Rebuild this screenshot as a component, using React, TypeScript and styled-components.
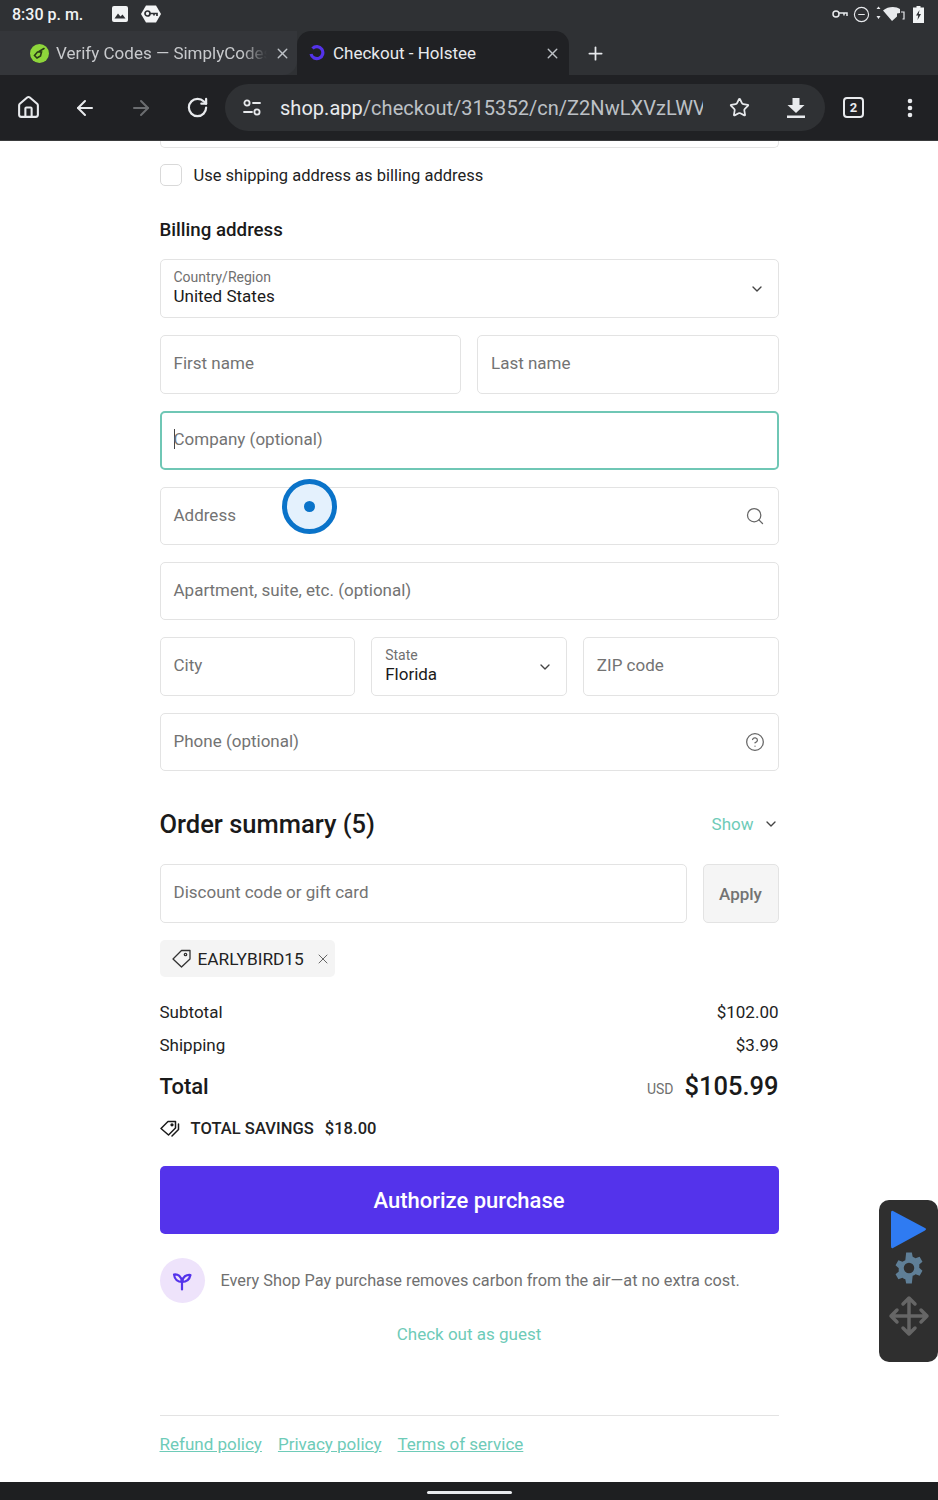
import React from "react";
import styled, { createGlobalStyle } from "styled-components";
import { ArrowLeft, ArrowRight, ChevronDown, Home, Plus, RotateCw, Search, Star, X, CircleHelp, Tag, MinusCircle } from "lucide-react";

const Global = createGlobalStyle`
  html, body { margin: 0; padding: 0; background: #fff; }
  * { box-sizing: border-box; }
  body { font-family: Roboto, "Liberation Sans", sans-serif; color: #1a1a1a; }
`;

const Screen = styled.div`
  width: 938px; height: 1500px; position: relative; overflow: hidden;
  display: flex; flex-direction: column; background: #fff;
`;
const Chrome = styled.header`background: #2f3134; color: #e8eaed; flex: none;`;
const StatusBar = styled.div`
  height: 31px; display: flex; align-items: center; padding: 0 14px 3px 12px;
`;
const Time = styled.span`font-size: 16px; font-weight: 500; margin-right: 16px; color: #f1f3f4;`;
const StatusLeft = styled.div`display: flex; align-items: center; gap: 13px; flex: 1;`;
const StatusRight = styled.div`display: flex; align-items: center; gap: 5px;`;
const TabStrip = styled.div`height: 44px; display: flex; align-items: stretch;`;
const Tab = styled.div<{ $active?: boolean }>`
  width: ${p => (p.$active ? 272 : 297)}px;
  padding: ${p => (p.$active ? "0 8px 0 12px" : "0 6px 0 30px")};
  display: flex; align-items: center; gap: 7px; font-size: 17px;
  color: ${p => (p.$active ? "#e8eaed" : "#c8cacd")};
  background: ${p => (p.$active ? "#202124" : "#34363a")};
  border-radius: ${p => (p.$active ? "14px 14px 0 0" : "0 0 14px 0")};
`;
const TabTitle = styled.span<{ $fade?: boolean }>`
  flex: 1; white-space: nowrap; overflow: hidden;
  ${p => p.$fade && "mask-image: linear-gradient(to right, #000 88%, transparent 100%);"}
`;
const NewTab = styled.div`width: 52px; display: flex; align-items: center; justify-content: center;`;
const Toolbar = styled.div`
  height: 66px; background: #202124; display: flex; align-items: center;
  border-bottom: 1px solid #3a3b3d; padding-left: 0;
`;
const ToolButton = styled.div<{ $w: number }>`
  width: ${p => p.$w}px; display: flex; justify-content: center; align-items: center; flex: none;
`;
const Omnibox = styled.div`
  width: 600px; height: 47px; margin-left: 0; border-radius: 24px; background: #2f3134;
  display: flex; align-items: center; padding-left: 17px; flex: none;
`;
const Url = styled.div`
  width: 423px; margin-left: 18px; font-size: 20px; white-space: nowrap; overflow: hidden; color: #bdc1c6; letter-spacing: 0.03px;
  b { font-weight: 400; color: #e8eaed; }
`;
const TabCount = styled.div`
  width: 21px; height: 21px; border: 2px solid #e8eaed; border-radius: 4px;
  font-size: 13px; font-weight: 700; display: flex; align-items: center; justify-content: center; color: #e8eaed;
`;
const Main = styled.main`flex: 1; display: flex; flex-direction: column; align-items: center;`;
const Column = styled.div`width: 619px; display: flex; flex-direction: column; flex: 1;`;
const CutField = styled.div`
  height: 7px; border: 1px solid #e4e4e4; border-top: 0; border-radius: 0 0 5px 5px;
`;
const CheckRow = styled.label`
  margin-top: 16px; height: 22px; display: flex; align-items: center; gap: 12px; font-size: 16.5px; color: #222;
`;
const CheckBox = styled.span`
  width: 22px; height: 22px; border: 1px solid #d9d9d9; border-radius: 5px; background: #fff;
`;
const SectionTitle = styled.h2`
  margin: 31px 0 16px; font-size: 18.7px; line-height: 26px; font-weight: 500; color: #1a1a1a;
`;
const FieldStack = styled.div`display: flex; flex-direction: column; gap: 17px;`;
const FieldRow = styled.div<{ $cols: string }>`display: grid; grid-template-columns: ${p => p.$cols}; gap: 16px;`;
const Field = styled.div<{ $focus?: boolean; $h?: number }>`
  height: ${p => p.$h ?? 59}px; padding: 0 13px; border-radius: 5px; display: flex; align-items: center; justify-content: space-between;
  border: ${p => (p.$focus ? "2px solid #6fc7b5" : "1px solid #e3e3e3")};
  ${p => p.$focus && "padding: 0 12px; margin-top:-0px;"}
  background: #fff;
`;
const Placeholder = styled.span`font-size: 17px; color: #737373; margin-top: -3px;`;
const Caret = styled.span`
  display: inline-block; width: 1px; height: 20px; background: #444; vertical-align: -4px; margin-right: -1px;
`;
const SelectText = styled.div`display: flex; flex-direction: column; margin-top: -3px;`;
const SelectLabel = styled.span`font-size: 14px; line-height: 17px; color: #707070;`;
const SelectValue = styled.span`font-size: 17px; line-height: 20px; color: #1a1a1a;`;
const SummaryHead = styled.div`
  margin-top: 35px; height: 36px; display: flex; justify-content: space-between; align-items: center;
`;
const SummaryTitle = styled.h2`margin: 0; font-size: 25.5px; font-weight: 500; color: #1a1a1a;`;
const ShowToggle = styled.div`display: flex; align-items: center; gap: 9px; font-size: 17px; color: #6ecbb8;`;
const DiscountRow = styled.div`
  margin-top: 22px; display: grid; grid-template-columns: 527px 76px; gap: 16px;
`;
const Apply = styled.div`
  height: 59px; border: 1px solid #e3e3e3; border-radius: 5px; background: #f5f5f5; display: flex; align-items: center; justify-content: center;
  font-size: 17px; font-weight: 500; color: #737373;
`;
const Chip = styled.div`
  margin-top: 17px; width: 175px; height: 37px; background: #f4f4f4; border-radius: 5px;
  display: flex; align-items: center; padding-left: 12px; gap: 7px; font-size: 17.3px; color: #222;
`;
const AmountRow = styled.div<{ $mt: number }>`
  margin-top: ${p => p.$mt}px; height: 22px; display: flex; justify-content: space-between; align-items: center; font-size: 17px; color: #222;
`;
const TotalRow = styled.div`
  margin-top: 13px; height: 34px; display: flex; justify-content: space-between; align-items: center;
`;
const TotalLabel = styled.span`font-size: 22px; font-weight: 500; color: #1a1a1a;`;
const TotalAmount = styled.div`display: flex; align-items: center; gap: 11px;`;
const Currency = styled.span`font-size: 14px; color: #707070; margin-top: 6px;`;
const TotalValue = styled.span`font-size: 25.5px; font-weight: 500; color: #1a1a1a;`;
const Savings = styled.div`
  margin-top: 13px; height: 24px; display: flex; align-items: center; font-size: 16.5px; font-weight: 500; color: #222; letter-spacing: 0.05px;
  svg { margin-right: 11px; }
  span { margin-right: 11px; }
`;
const PayButton = styled.button`
  margin-top: 26px; height: 68px; border: 0; border-radius: 5px; background: #5433eb; color: #fff;
  font: 500 22px Roboto, sans-serif;
`;
const Carbon = styled.div`
  margin-top: 24px; height: 45px; display: flex; align-items: center; gap: 16px; font-size: 16.3px; color: #707070;
`;
const Leaf = styled.div`
  width: 45px; height: 45px; border-radius: 50%; background: #eee3fb; display: flex; align-items: center; justify-content: center; flex: none;
`;
const Guest = styled.a`
  margin-top: 20px; text-align: center; font-size: 17px; line-height: 22px; color: #6ecbb8;
`;
const Footer = styled.footer`
  margin-top: auto; height: 67px; border-top: 1px solid #e3e3e3; display: flex; gap: 16px; padding-top: 18px;
`;
const FooterLink = styled.a`font-size: 17px; line-height: 20px; color: #6ecbb8; text-decoration: underline;`;
const NavBar = styled.div`
  height: 18px; flex: none; background: #1e1f21; display: flex; justify-content: center; align-items: flex-end; padding-bottom: 6px;
`;
const NavPill = styled.div`width: 85px; height: 3px; border-radius: 2px; background: #e8eaed;`;
const TouchMark = styled.div`
  position: absolute; left: 282px; top: 479px; width: 55px; height: 55px; border-radius: 50%;
  border: 5px solid #0a73c9; background: rgba(225, 240, 253, 0.9); display: flex; align-items: center; justify-content: center;
  &::after { content: ""; width: 11px; height: 11px; border-radius: 50%; background: #0a73c9; }
`;
const FloatPanel = styled.div`
  position: absolute; right: 0; top: 1200px; width: 59px; height: 162px; background: #2f2f2f; border-radius: 10px 0 0 10px 
  ; display: flex; flex-direction: column; align-items: center; padding-top: 8px;
  border-radius: 10px;
`;

const Sprout = () => (
  <svg width="22" height="22" viewBox="0 0 22 22" fill="none" stroke="#5433eb" strokeWidth="2.2" strokeLinecap="round" strokeLinejoin="round">
    <path d="M11 19.5V10.5" />
    <path d="M11 12C7 12 3.5 9.5 3 4.5C7 4 10.5 6 11 12Z" />
    <path d="M11 12C15 12 18.5 9.5 19.5 5C15.5 4.5 11.5 6.500 11 12Z" />
  </svg>
);
const Sliders = () => (
  <svg width="20" height="20" viewBox="0 0 20 20" fill="none" stroke="#e8eaed" strokeWidth="1.8" strokeLinecap="round">
    <circle cx="5" cy="5" r="2.6" /><path d="M11 5h7" /><path d="M2 14h8" /><circle cx="15" cy="14" r="2.600" />
  </svg>
);
const Download = () => (
  <svg width="20" height="22" viewBox="0 0 20 22" fill="#e8eaed"><path d="M6.500 1h7v7h5L10 16 1.500 8h5z" /><rect x="1" y="18.500" width="18" height="2.500" /></svg>
);
const Dots = () => (
  <svg width="6" height="20" viewBox="0 0 6 20" fill="#e8eaed"><circle cx="3" cy="3" r="2.300" /><circle cx="3" cy="10" r="2.300" /><circle cx="3" cy="17" r="2.300" /></svg>
);
const GalleryIcon = () => (
  <svg width="16" height="16" viewBox="0 0 16 16"><rect width="16" height="16" rx="2" fill="#f1f3f4" /><path d="M2.500 12.500l3.500-5 2.500 3 2-2 3 4z" fill="#2f3134" /></svg>
);
const VpnBadge = () => (
  <svg width="20" height="18" viewBox="0 0 20 18"><path d="M5 0.500h10L20 9l-5 8.500H5L0 9z" fill="#f4f5f6" /><circle cx="6.500" cy="8.500" r="2.500" fill="none" stroke="#2f3134" strokeWidth="1.700" /><path d="M9 8.500h7v2.500M13 8.500v2" fill="none" stroke="#2f3134" strokeWidth="1.700" /></svg>
);
const KeyIcon = () => (
  <svg width="16" height="10" viewBox="0 0 16 10" fill="none" stroke="#e8eaed" strokeWidth="1.500"><circle cx="4" cy="5" r="3" /><path d="M7 4h8v3M12 4v2.500" /></svg>
);
const WifiIcon = () => (
  <svg width="33" height="16" viewBox="0 0 33 16"><path d="M1.500 3l2 -2.500 2 2.500zM1.500 10l2 3 2-3z" fill="#e8eaed" /><path d="M8 4.500C13 0 21 0 25 3v4l-3 .5v3L17 15z" fill="#e8eaed" /><path d="M26 6h3v7h-1.500" stroke="#e8eaed" fill="none" strokeWidth="1.200" /></svg>
);
const Battery = () => (
  <svg width="11" height="17" viewBox="0 0 11 17"><path d="M3.500 0h4v1.500H11V17H0V1.500h3.500z" fill="#f1f3f4" /><path d="M6.500 4L3 9.500h2.200L4.500 14 8 8H5.800z" fill="#2f3134" /></svg>
);
const VerifyFavicon = () => (
  <svg width="19" height="19" viewBox="0 0 19 19" style={{ flex: "none" }}>
    <circle cx="9.500" cy="9.500" r="9.500" fill="#8ed63b" />
    <path d="M4.500 11.500l3-3.500h4l-1 4-3.500 2zM9 7.500l5-3" stroke="#2a3a18" strokeWidth="1.600" fill="none" strokeLinecap="round" />
  </svg>
);
const ShopFavicon = () => (
  <svg width="16" height="17" viewBox="0 0 16 17" style={{ flex: "none" }} fill="none">
    <path d="M3.500 3.500A6 6 0 1 1 2 9" stroke="#5433eb" strokeWidth="3.200" />
    <circle cx="8" cy="9" r="2" fill="#202124" />
  </svg>
);
const TagOutline = () => (
  <svg width="19" height="19" viewBox="0 0 19 19" fill="none" stroke="#333" strokeWidth="1.300" strokeLinejoin="round">
    <path d="M1 10L9.500 1.500H18V10L9.500 18z" /><circle cx="13.500" cy="5.500" r="1.200" />
  </svg>
);
const DoubleTag = () => (
  <svg width="20" height="18" viewBox="0 0 20 18" fill="none" stroke="#1a1a1a" strokeWidth="1.500" strokeLinejoin="round" strokeLinecap="round">
    <path d="M1 9.500L8 2.500h7.500v6.500l-7 7z" /><circle cx="12" cy="5.800" r=".9" /><path d="M18.500 5v5.500L12 17" />
  </svg>
);
const PlayShape = () => (
  <svg width="38" height="42" viewBox="0 0 38 42"><path d="M3 3L35 20Q37 21 35 22.500L3 40Q1 41 1 38V5Q1 2 3 3Z" fill="#2f7bf2" /></svg>
);
const Gear = () => (
  <svg width="34" height="36" viewBox="0 0 24 24" fill="#5f7f97"><path fillRule="evenodd" d="M10 1h4l.6 3a8 8 0 0 1 2 1.100l2.900-1 2 3.500-2.300 2a8 8 0 0 1 0 2.300l2.300 2-2 3.500-2.900-1a8 8 0 0 1-2 1.100L14 23h-4l-.6-3a8 8 0 0 1-2-1.100l-2.900 1-2-3.500 2.300-2a8 8 0 0 1 0-2.300l-2.300-2 2-3.500 2.900 1a8 8 0 0 1 2-1.100zM12 8.300a3.700 3.700 0 1 0 0 7.400 3.700 3.700 0 0 0 0-7.400z" /></svg>
);
const MoveArrows = () => (
  <svg width="42" height="42" viewBox="0 0 42 42" fill="none" stroke="#666" strokeWidth="3.500" strokeLinecap="round" strokeLinejoin="round" style={{ marginTop: 9 }}>
    <path d="M21 3v36M3 21h36M15 9l6-6 6 6M15 33l6 6 6-6M9 15l-6 6 6 6M33 15l6 6-6 6" />
  </svg>
);

export default function App() {
  const ic = "#e8eaed";
  return (
    <Screen>
      <Global />
      <Chrome>
        <StatusBar>
          <StatusLeft>
            <Time>8:30 p. m.</Time>
            <GalleryIcon />
            <VpnBadge />
          </StatusLeft>
          <StatusRight>
            <KeyIcon />
            <MinusCircle size={17} color={ic} strokeWidth={1.6} />
            <WifiIcon />
            <Battery />
          </StatusRight>
        </StatusBar>
        <TabStrip>
          <Tab>
            <VerifyFavicon />
            <TabTitle $fade>Verify Codes — SimplyCodes</TabTitle>
            <X size={17} color="#bdc1c6" />
          </Tab>
          <Tab $active>
            <ShopFavicon />
            <TabTitle style={{ marginLeft: 1 }}>Checkout - Holstee</TabTitle>
            <X size={17} color="#bdc1c6" />
          </Tab>
          <NewTab><Plus size={21} color={ic} /></NewTab>
        </TabStrip>
        <Toolbar>
          <ToolButton $w={57}><Home size={25} color={ic} strokeWidth={2} /></ToolButton>
          <ToolButton $w={56}><ArrowLeft size={24} color={ic} /></ToolButton>
          <ToolButton $w={56}><ArrowRight size={24} color="#6b6d70" /></ToolButton>
          <ToolButton $w={56}><RotateCw size={23} color={ic} strokeWidth={2.300} /></ToolButton>
          <Omnibox>
            <Sliders />
            <Url><b>shop.app</b>/checkout/315352/cn/Z2NwLXVzLWVhc3</Url>
            <ToolButton $w={73}><Star size={21} color={ic} strokeWidth={2} /></ToolButton>
            <ToolButton $w={40}><Download /></ToolButton>
          </Omnibox>
          <ToolButton $w={57}><TabCount>2</TabCount></ToolButton>
          <ToolButton $w={56}><Dots /></ToolButton>
        </Toolbar>
      </Chrome>
      <Main>
        <Column>
          <CutField />
          <CheckRow><CheckBox />Use shipping address as billing address</CheckRow>
          <SectionTitle>Billing address</SectionTitle>
          <FieldStack>
            <Field>
              <SelectText><SelectLabel>Country/Region</SelectLabel><SelectValue>United States</SelectValue></SelectText>
              <ChevronDown size={16} color="#444" />
            </Field>
            <FieldRow $cols="1fr 1fr">
              <Field><Placeholder>First name</Placeholder></Field>
              <Field><Placeholder>Last name</Placeholder></Field>
            </FieldRow>
            <Field $focus><Placeholder><Caret />Company (optional)</Placeholder></Field>
            <Field $h={58}>
              <Placeholder>Address</Placeholder>
              <Search size={20} color="#666" strokeWidth={1.500} />
            </Field>
            <Field $h={58}><Placeholder>Apartment, suite, etc. (optional)</Placeholder></Field>
            <FieldRow $cols="1fr 1fr 1fr">
              <Field><Placeholder>City</Placeholder></Field>
              <Field>
                <SelectText><SelectLabel>State</SelectLabel><SelectValue>Florida</SelectValue></SelectText>
                <ChevronDown size={16} color="#444" />
              </Field>
              <Field><Placeholder>ZIP code</Placeholder></Field>
            </FieldRow>
            <Field $h={58}>
              <Placeholder>Phone (optional)</Placeholder>
              <CircleHelp size={20} color="#666" strokeWidth={1.500} />
            </Field>
          </FieldStack>
          <SummaryHead>
            <SummaryTitle>Order summary (5)</SummaryTitle>
            <ShowToggle>Show <ChevronDown size={16} color="#444" /></ShowToggle>
          </SummaryHead>
          <DiscountRow>
            <Field><Placeholder>Discount code or gift card</Placeholder></Field>
            <Apply>Apply</Apply>
          </DiscountRow>
          <Chip>
            <TagOutline />
            EARLYBIRD15
            <X size={16} color="#666" strokeWidth={1.500} style={{ marginLeft: 4 }} />
          </Chip>
          <AmountRow $mt={24}><span>Subtotal</span><span>$102.00</span></AmountRow>
          <AmountRow $mt={11}><span>Shipping</span><span>$3.99</span></AmountRow>
          <TotalRow>
            <TotalLabel>Total</TotalLabel>
            <TotalAmount><Currency>USD</Currency><TotalValue>$105.99</TotalValue></TotalAmount>
          </TotalRow>
          <Savings><DoubleTag /><span>TOTAL SAVINGS</span>$18.00</Savings>
          <PayButton>Authorize purchase</PayButton>
          <Carbon>
            <Leaf><Sprout /></Leaf>
            Every Shop Pay purchase removes carbon from the air—at no extra cost.
          </Carbon>
          <Guest>Check out as guest</Guest>
          <Footer>
            <FooterLink>Refund policy</FooterLink>
            <FooterLink>Privacy policy</FooterLink>
            <FooterLink>Terms of service</FooterLink>
          </Footer>
        </Column>
      </Main>
      <NavBar><NavPill /></NavBar>
      <TouchMark />
      <FloatPanel>
        <PlayShape />
        <Gear />
        <MoveArrows />
      </FloatPanel>
    </Screen>
  );
}
